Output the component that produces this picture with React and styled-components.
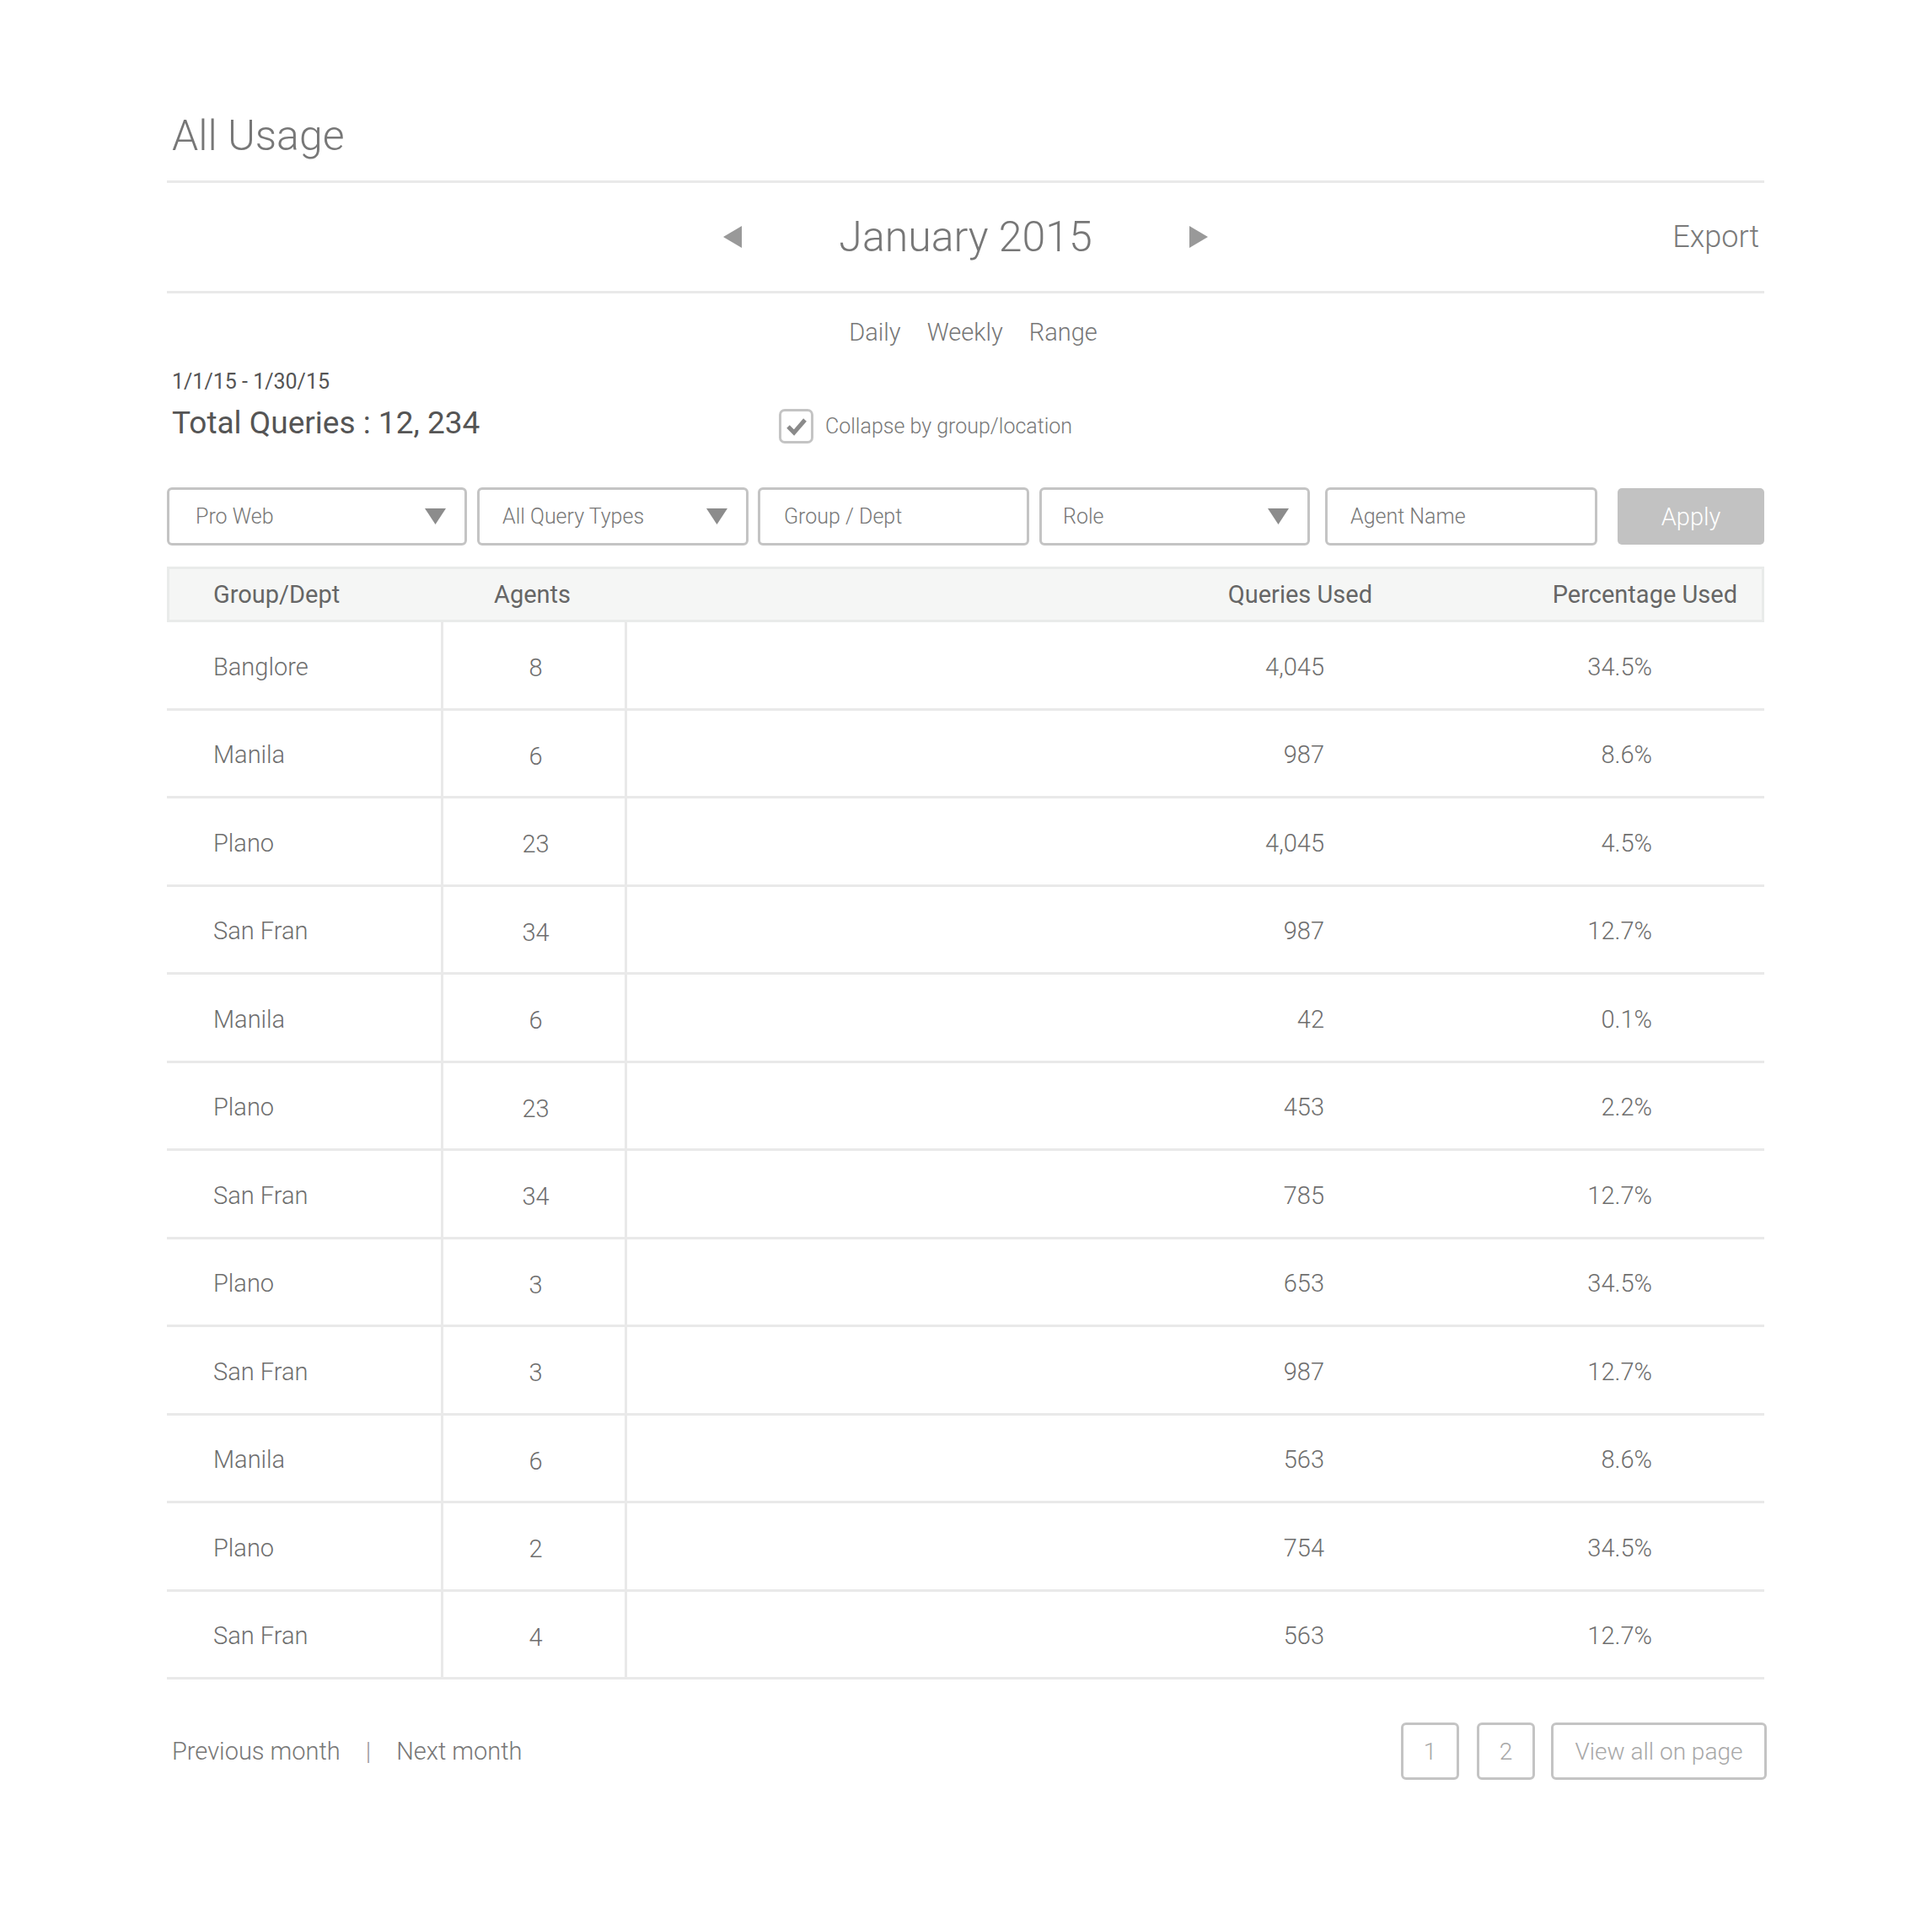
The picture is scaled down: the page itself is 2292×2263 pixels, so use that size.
import React from 'react';
import styled, { createGlobalStyle } from 'styled-components';

const GlobalStyle = createGlobalStyle`
  body {
    margin: 0;
    background: #ffffff;
    font-family: Roboto, "Liberation Sans", sans-serif;
    color: #777777;
  }
`;

const Page = styled.div`
  width: 1895px;
  margin-left: 198px;
  padding-bottom: 120px;
`;

const TitleBar = styled.div`
  padding: 131px 0 23px 6px;
  border-bottom: 3px solid #e9e9e9;
`;

const Title = styled.h1`
  margin: 0;
  font-size: 50px;
  line-height: 60px;
  font-weight: 300;
  color: #777777;
`;

const MonthBar = styled.div`
  display: grid;
  grid-template-columns: 1fr auto 1fr;
  align-items: center;
  height: 128px;
  border-bottom: 3px solid #e9e9e9;
`;

const MonthNav = styled.div`
  display: flex;
  align-items: center;
  gap: 115px;
  grid-column: 2;
`;

const ArrowBtn = styled.button`
  display: flex;
  background: none;
  border: none;
  padding: 0;
  cursor: pointer;
`;

const MonthLabel = styled.div`
  font-size: 50px;
  font-weight: 300;
  line-height: 60px;
  color: #777777;
`;

const ExportLink = styled.a`
  justify-self: end;
  padding-right: 6px;
  font-size: 36px;
  font-weight: 300;
  color: #7a7a7a;
  cursor: pointer;
`;

const Tabs = styled.div`
  display: flex;
  justify-content: center;
  gap: 31px;
  margin-top: 29px;
  padding-left: 18px;
`;

const Tab = styled.span`
  font-size: 29px;
  font-weight: 300;
  line-height: 34px;
  color: #777777;
  cursor: pointer;
`;

const SummaryRow = styled.div`
  display: flex;
  align-items: flex-end;
  margin-top: 27px;
  padding-left: 6px;
`;

const SummaryText = styled.div`
  width: 720px;
`;

const DateRange = styled.div`
  font-size: 25px;
  line-height: 30px;
  color: #555555;
`;

const TotalQueries = styled.div`
  margin-top: 12px;
  font-size: 37px;
  line-height: 44px;
  color: #555555;
`;

const CollapseLabel = styled.label`
  display: flex;
  align-items: center;
  gap: 14px;
  margin-bottom: -2px;
  font-size: 25px;
  font-weight: 300;
  color: #777777;
`;

const CheckBox = styled.span`
  display: flex;
  align-items: center;
  justify-content: center;
  width: 41px;
  height: 41px;
  box-sizing: border-box;
  border: 3px solid #c4c4c4;
  border-radius: 7px;
`;

const Filters = styled.div`
  display: flex;
  align-items: center;
  margin-top: 54px;
  height: 69px;
`;

const Field = styled.div`
  display: flex;
  align-items: center;
  justify-content: space-between;
  box-sizing: border-box;
  width: ${(p) => p.w}px;
  height: 69px;
  margin-right: ${(p) => p.gap}px;
  padding: 0 22px 0 ${(p) => p.pad}px;
  border: 3px solid #c4c4c4;
  border-radius: 6px;
  font-size: 25px;
  font-weight: 300;
  color: #777777;
`;

const ApplyButton = styled.button`
  width: 174px;
  height: 67px;
  margin-left: auto;
  border: none;
  border-radius: 5px;
  background: #c2c2c2;
  color: #ffffff;
  font-family: inherit;
  font-size: 29px;
  font-weight: 300;
`;

const Table = styled.div`
  margin-top: 25px;
`;

const HeaderRow = styled.div`
  display: grid;
  grid-template-columns: 333px 200px 1fr 433px;
  align-items: center;
  box-sizing: border-box;
  height: 66px;
  padding: 0 29px 0 52px;
  background: #f5f6f5;
  border: 3px solid #e9ebea;
  font-size: 29px;
  color: #666666;
`;

const HeaderCell = styled.div`
  text-align: ${(p) => p.align || 'left'};
`;

const Row = styled.div`
  display: grid;
  grid-template-columns: 325px 221px 1fr 389px;
  height: 104.5px;
  box-sizing: border-box;
  padding-right: 133px;
  border-bottom: 3px solid #e9e9e9;
  font-size: 29px;
  font-weight: 300;
  color: #6e6e6e;
`;

const Cell = styled.div`
  display: flex;
  align-items: center;
  justify-content: ${(p) => p.justify || 'flex-start'};
  padding-top: 4px;
  padding-left: ${(p) => p.pl || 0}px;
`;

const AgentsCell = styled(Cell)`
  justify-content: center;
  padding-left: 4px;
  border-left: 3px solid #e9e9e9;
  border-right: 3px solid #e9e9e9;
  margin-bottom: -3px;
`;

const Footer = styled.div`
  display: flex;
  align-items: center;
  justify-content: space-between;
  margin-top: 51px;
  padding-left: 6px;
`;

const MonthLinks = styled.div`
  display: flex;
  align-items: center;
  gap: 30px;
  font-size: 29px;
  font-weight: 300;
  color: #777777;
`;

const Divider = styled.span`
  color: #999999;
`;

const Pager = styled.div`
  display: flex;
  margin-right: -3px;
`;

const PageButton = styled.button`
  box-sizing: border-box;
  width: ${(p) => (p.wide ? 256 : 69)}px;
  height: 68px;
  margin-left: ${(p) => (p.wide ? 19 : 21)}px;
  padding: 0;
  background: #ffffff;
  border: 3px solid #c4c4c4;
  border-radius: 6px;
  font-family: inherit;
  font-size: 28px;
  font-weight: 300;
  color: #a8a8a8;
`;

const Triangle = ({ dir }) => (
  <svg width="22" height="26" viewBox="0 0 22 26">
    {dir === 'left'
      ? <polygon points="22,0 22,26 0,13" fill="#999999" />
      : <polygon points="0,0 0,26 22,13" fill="#999999" />}
  </svg>
);

const Caret = () => (
  <svg width="25" height="19" viewBox="0 0 25 19">
    <polygon points="0,0 25,0 12.5,19" fill="#8c8c8c" />
  </svg>
);

const filters = [
  { label: 'Pro Web', w: 356, gap: 12, caret: true, pad: 31 },
  { label: 'All Query Types', w: 322, gap: 11, caret: true, pad: 27 },
  { label: 'Group / Dept', w: 322, gap: 12, pad: 28 },
  { label: 'Role', w: 321, gap: 18, caret: true, pad: 25 },
  { label: 'Agent Name', w: 323, gap: 0, pad: 27 },
];

const rows = [
  ['Banglore', '8', '4,045', '34.5%'],
  ['Manila', '6', '987', '8.6%'],
  ['Plano', '23', '4,045', '4.5%'],
  ['San Fran', '34', '987', '12.7%'],
  ['Manila', '6', '42', '0.1%'],
  ['Plano', '23', '453', '2.2%'],
  ['San Fran', '34', '785', '12.7%'],
  ['Plano', '3', '653', '34.5%'],
  ['San Fran', '3', '987', '12.7%'],
  ['Manila', '6', '563', '8.6%'],
  ['Plano', '2', '754', '34.5%'],
  ['San Fran', '4', '563', '12.7%'],
];

export default function App() {
  return (
    <>
      <GlobalStyle />
      <Page>
        <TitleBar>
          <Title>All Usage</Title>
        </TitleBar>

        <MonthBar>
          <MonthNav>
            <ArrowBtn type="button"><Triangle dir="left" /></ArrowBtn>
            <MonthLabel>January 2015</MonthLabel>
            <ArrowBtn type="button"><Triangle dir="right" /></ArrowBtn>
          </MonthNav>
          <ExportLink>Export</ExportLink>
        </MonthBar>

        <Tabs>
          <Tab>Daily</Tab>
          <Tab>Weekly</Tab>
          <Tab>Range</Tab>
        </Tabs>

        <SummaryRow>
          <SummaryText>
            <DateRange>1/1/15 - 1/30/15</DateRange>
            <TotalQueries>Total Queries : 12, 234</TotalQueries>
          </SummaryText>
          <CollapseLabel>
            <CheckBox>
              <svg width="26" height="22" viewBox="0 0 26 22">
                <polyline points="3,11 10,18 23,3" fill="none" stroke="#8a8a8a" strokeWidth="5" />
              </svg>
            </CheckBox>
            Collapse by group/location
          </CollapseLabel>
        </SummaryRow>

        <Filters>
          {filters.map((f) => (
            <Field key={f.label} w={f.w} gap={f.gap} pad={f.pad}>
              {f.label}
              {f.caret ? <Caret /> : null}
            </Field>
          ))}
          <ApplyButton type="button">Apply</ApplyButton>
        </Filters>

        <Table>
          <HeaderRow>
            <HeaderCell>Group/Dept</HeaderCell>
            <HeaderCell>Agents</HeaderCell>
            <HeaderCell align="right">Queries Used</HeaderCell>
            <HeaderCell align="right">Percentage Used</HeaderCell>
          </HeaderRow>
          {rows.map((r, i) => (
            <Row key={i}>
              <Cell pl={55}>{r[0]}</Cell>
              <AgentsCell>{r[1]}</AgentsCell>
              <Cell justify="flex-end">{r[2]}</Cell>
              <Cell justify="flex-end">{r[3]}</Cell>
            </Row>
          ))}
        </Table>

        <Footer>
          <MonthLinks>
            <span>Previous month</span>
            <Divider>|</Divider>
            <span>Next month</span>
          </MonthLinks>
          <Pager>
            <PageButton type="button">1</PageButton>
            <PageButton type="button">2</PageButton>
            <PageButton type="button" wide>View all on page</PageButton>
          </Pager>
        </Footer>
      </Page>
    </>
  );
}
